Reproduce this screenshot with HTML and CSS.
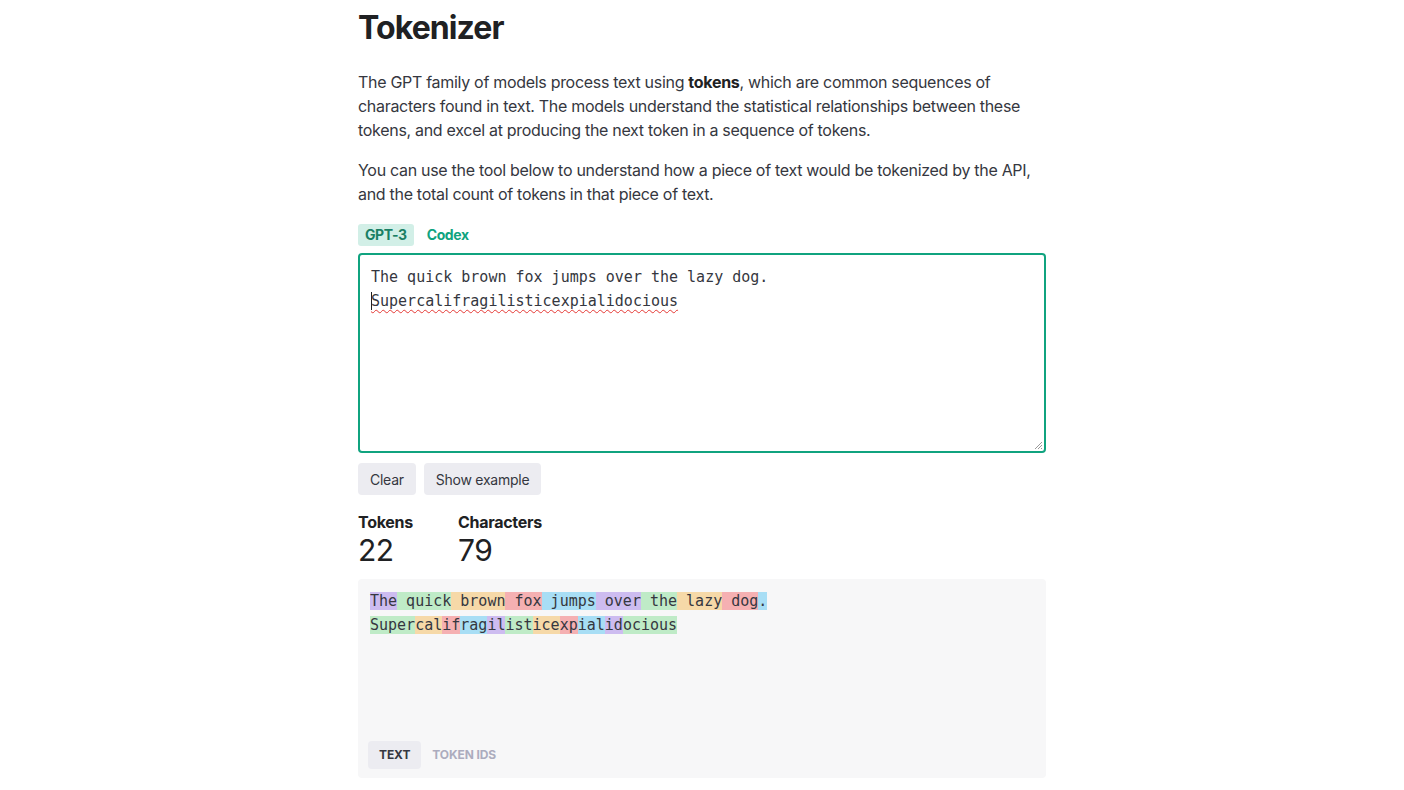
FILE: index.html
```html
<!DOCTYPE html>
<html lang="en">
<head>
<meta charset="utf-8">
<title>Tokenizer</title>
<link rel="stylesheet" href="styles.css">
</head>
<body>
<main class="page">
  <h1 class="title">Tokenizer</h1>
  <p class="para">The GPT family of models process text using <strong>tokens</strong>, which are common sequences of characters found in text. The models understand the statistical relationships between these tokens, and excel at producing the next token in a sequence of tokens.</p>
  <p class="para">You can use the tool below to understand how a piece of text would be tokenized by the API, and the total count of tokens in that piece of text.</p>

  <div class="model-tabs">
    <span class="model-tab active">GPT-3</span>
    <span class="model-tab">Codex</span>
  </div>

  <div class="editor" role="textbox" aria-multiline="true">
    <div class="editor-line">The quick brown fox jumps over the lazy dog.</div>
    <div class="editor-line"><span class="caret"></span><span class="misspelled">Supercalifragilisticexpialidocious</span></div>
    <svg class="grip" width="10" height="10" viewBox="0 0 10 10" aria-hidden="true">
      <path d="M9 2 L2 9 M9 5 L5 9 M9 8 L8 9" stroke="#9a9a9a" stroke-width="1" fill="none"/>
    </svg>
  </div>

  <div class="actions">
    <button class="btn">Clear</button>
    <button class="btn">Show example</button>
  </div>

  <div class="stats">
    <div class="stat">
      <div class="stat-label">Tokens</div>
      <div class="stat-value">22</div>
    </div>
    <div class="stat">
      <div class="stat-label">Characters</div>
      <div class="stat-value">79</div>
    </div>
  </div>

  <div class="output">
    <div class="tokens">
      <div class="tok-line"><span class="t c0">The</span><span class="t c1"> quick</span><span class="t c2"> brown</span><span class="t c3"> fox</span><span class="t c4"> jumps</span><span class="t c0"> over</span><span class="t c1"> the</span><span class="t c2"> lazy</span><span class="t c3"> dog</span><span class="t c4">.</span></div>
      <div class="tok-line"><span class="t c1">Super</span><span class="t c2">cal</span><span class="t c3">if</span><span class="t c4">rag</span><span class="t c0">il</span><span class="t c1">ist</span><span class="t c2">ice</span><span class="t c3">xp</span><span class="t c4">ial</span><span class="t c0">id</span><span class="t c1">ocious</span></div>
    </div>
    <div class="view-tabs">
      <span class="view-tab active">Text</span>
      <span class="view-tab">Token IDs</span>
    </div>
  </div>
</main>
</body>
</html>
```
FILE: styles.css
```css
* { box-sizing: border-box; }

body {
  margin: 0;
  background: #ffffff;
  font-family: Inter, "Noto Sans", sans-serif;
  color: #353740;
}

.page {
  width: 688px;
  margin: 0 auto;
  padding-top: 8px;
}

.title {
  margin: 0;
  font-size: 32px;
  line-height: 40px;
  font-weight: 700;
  color: #202123;
  letter-spacing: -0.9px;
}

.para {
  margin: 22px 0 0;
  font-size: 16px;
  line-height: 24px;
  color: #353740;
  letter-spacing: -0.3px;
}
.para + .para { margin-top: 16px; }
.para strong { font-weight: 700; color: #202123; }

.model-tabs {
  display: flex;
  gap: 6px;
  margin-top: 18px;
}
.model-tab {
  height: 22px;
  line-height: 22px;
  padding: 0 7px;
  font-size: 14px;
  font-weight: 700;
  color: #10a37f;
  border-radius: 3px;
  letter-spacing: -0.4px;
}
.model-tab.active {
  background: #d2efe7;
  color: #1a7f64;
}

.editor {
  position: relative;
  margin-top: 7px;
  height: 200px;
  border: 2px solid #10a37f;
  border-radius: 4px;
  padding: 10px 11px;
  font-family: "DejaVu Sans Mono", "Liberation Mono", monospace;
  font-size: 15px;
  line-height: 24px;
  color: #353740;
}
.editor-line { white-space: pre; }
.caret {
  display: inline-block;
  width: 1px;
  height: 18px;
  background: #202123;
  vertical-align: -4px;
  margin-right: -1px;
}
.misspelled {
  text-decoration: underline wavy #e53935;
  text-decoration-thickness: 1px;
  text-underline-offset: 3px;
}
.grip {
  position: absolute;
  right: 1px;
  bottom: 1px;
}

.actions {
  display: flex;
  gap: 8px;
  margin-top: 10px;
}
.btn {
  height: 32px;
  padding: 0 12px;
  border: none;
  border-radius: 4px;
  background: #ececf1;
  font-family: Inter, "Noto Sans", sans-serif;
  font-size: 14px;
  letter-spacing: -0.25px;
  color: #353740;
}

.stats {
  display: flex;
  margin-top: 15px;
}
.stat { min-width: 100px; }
.stat-label {
  font-size: 16px;
  line-height: 24px;
  font-weight: 700;
  color: #202123;
  letter-spacing: -0.3px;
}
.stat-value {
  font-size: 30px;
  line-height: 32px;
  font-weight: 400;
  color: #202123;
  letter-spacing: -0.5px;
}

.output {
  margin-top: 13px;
  height: 199px;
  background: #f7f7f8;
  border-radius: 4px;
  padding: 10px 12px 9px 10px;
  display: flex;
  flex-direction: column;
  justify-content: space-between;
}
.tokens {
  padding-left: 2px;
  font-family: "DejaVu Sans Mono", "Liberation Mono", monospace;
  font-size: 15px;
  line-height: 24px;
  color: #353740;
}
.tok-line { white-space: pre; }
.c0 { background: #cdbcf0; }
.c1 { background: #bfebc7; }
.c2 { background: #f6d9a8; }
.c3 { background: #f5b0b2; }
.c4 { background: #a8def5; }

.view-tabs {
  display: flex;
}
.view-tab {
  height: 28px;
  line-height: 28px;
  padding: 0 11px;
  font-size: 12px;
  font-weight: 700;
  text-transform: uppercase;
  color: #acacbe;
  border-radius: 4px;
  letter-spacing: -0.1px;
}
.view-tab.active {
  background: #ececf1;
  color: #353740;
}
```
